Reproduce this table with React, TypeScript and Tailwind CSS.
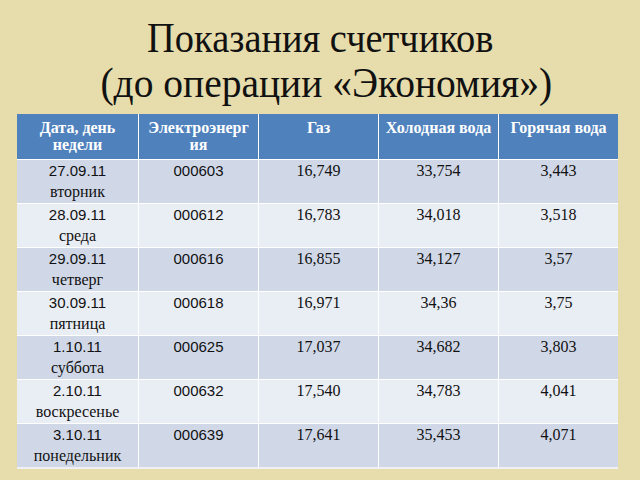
const rows = [
  { date: "27.09.11", day: "вторник", el: "000603", gas: "16,749", cold: "33,754", hot: "3,443" },
  { date: "28.09.11", day: "среда", el: "000612", gas: "16,783", cold: "34,018", hot: "3,518" },
  { date: "29.09.11", day: "четверг", el: "000616", gas: "16,855", cold: "34,127", hot: "3,57" },
  { date: "30.09.11", day: "пятница", el: "000618", gas: "16,971", cold: "34,36", hot: "3,75" },
  { date: "1.10.11", day: "суббота", el: "000625", gas: "17,037", cold: "34,682", hot: "3,803" },
  { date: "2.10.11", day: "воскресенье", el: "000632", gas: "17,540", cold: "34,783", hot: "4,041" },
  { date: "3.10.11", day: "понедельник", el: "000639", gas: "17,641", cold: "35,453", hot: "4,071" },
];

const serif = "font-['Liberation_Serif',serif]";
const sans = "font-['Liberation_Sans',sans-serif]";

export default function App() {
  return (
    <div className="w-[640px] h-[480px] bg-[#e7dcab] overflow-hidden flex flex-col">
      <h1 className={`${serif} text-[42px] leading-[45px] text-[#111] text-center pt-[16px]`}>
        <span className="inline-block scale-x-[0.915]">Показания счетчиков</span>
        <br />
        <span className="inline-block scale-x-[0.94] translate-x-[6px]">(до операции «Экономия»)</span>
      </h1>

      <div className="mt-[8px] ml-[17px] w-[601px] grid grid-cols-[121px_120px_120px_120px_120px] border-b-2 border-r border-[#eef0f4]">
        {/* header */}
        {[
          <>Дата, день<br />недели</>,
          <>Электроэнерг<br />ия</>,
          <>Газ</>,
          <>Холодная вода</>,
          <>Горячая вода</>,
        ].map((h, i) => (
          <div
            key={i}
            className={`h-[45px] bg-[#4f81bd] text-white font-bold text-[16px] leading-[17px] text-center pt-[5px] ${serif} ${i > 0 ? "border-l border-white" : ""}`}
          >
            {h}
          </div>
        ))}

        {rows.map((r, i) => {
          const bg = i % 2 === 0 ? "bg-[#d0d8e8]" : "bg-[#e9edf4]";
          const cell = `h-[44px] ${bg} border-t border-white text-center text-[#111] leading-[21px]`;
          return [
            <div key={`d${i}`} className={cell}>
              <div className={`${sans} text-[15px]`}>{r.date}</div>
              <div className={`${serif} text-[16px]`}>{r.day}</div>
            </div>,
            <div key={`e${i}`} className={`${cell} border-l ${sans} text-[15px]`}>{r.el}</div>,
            <div key={`g${i}`} className={`${cell} border-l ${serif} text-[16px]`}>{r.gas}</div>,
            <div key={`c${i}`} className={`${cell} border-l ${serif} text-[16px]`}>{r.cold}</div>,
            <div key={`h${i}`} className={`${cell} border-l ${serif} text-[16px]`}>{r.hot}</div>,
          ];
        })}
      </div>
    </div>
  );
}
